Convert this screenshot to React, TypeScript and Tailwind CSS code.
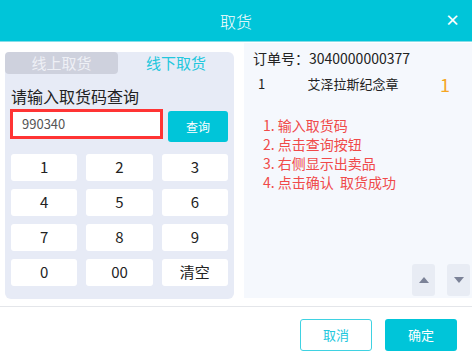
import React from "react";

const keys = ["1", "2", "3", "4", "5", "6", "7", "8", "9", "0", "00", "清空"];

const steps = ["1. 输入取货码", "2. 点击查询按钮", "3. 右侧显示出卖品", "4. 点击确认  取货成功"];

export default function App() {
  return (
    <div
      className="w-[472px] h-[360px] bg-white overflow-hidden"
      style={{ fontFamily: '"Noto Sans CJK SC", "Noto Sans", sans-serif' }}
    >
      {/* header */}
      <div className="relative h-[42px] bg-[#00c5d9] border-b border-[#86dde8] flex items-center justify-center">
        <span className="text-white text-[16px] font-light">取货</span>
        <span className="absolute right-[12px] top-[11px] text-white text-[15px] font-bold leading-[18px]">×</span>
      </div>

      {/* body */}
      <div className="flex h-[265px] border-b border-[#e4e6ea]">
        {/* left panel */}
        <div className="ml-[5px] mt-[10px] w-[229px] h-[247px] bg-[#e7ebf6] rounded-[6px]">
          <div className="flex h-[22px]">
            <div className="w-[113px] bg-[#ced1dd] rounded-[4px] flex items-center justify-center text-[15px] text-[#eef0f6]">
              线上取货
            </div>
            <div className="flex-1 flex items-center justify-center text-[15px] text-[#22c7dd]">线下取货</div>
          </div>
          <div className="mt-[12px] pl-[6px] text-[16px] leading-[20px] text-[#222]">请输入取货码查询</div>
          <div className="flex items-start mt-[3px] pl-[5px]">
            <div className="w-[153px] h-[30px] border-[3px] border-[#ff3434] bg-white flex items-center pl-[9px] text-[13px] text-[#555]">
              990340
            </div>
            <button className="ml-[5px] mt-[2px] w-[60px] h-[31px] bg-[#00c5d9] rounded-[3px] text-white text-[12px]">
              查询
            </button>
          </div>
          <div className="grid grid-cols-3 gap-x-[9px] gap-y-[8px] px-[6px] mt-[12px]">
            {keys.map((k) => (
              <button
                key={k}
                className="h-[27px] bg-white rounded-[3px] text-[15px] text-[#222] flex items-center justify-center"
              >
                {k}
              </button>
            ))}
          </div>
        </div>

        {/* right panel */}
        <div className="ml-[10px] flex-1 mt-[1px] h-[255px] bg-[#f5f8fd] relative">
          <div className="pl-[9px] pt-[7px] text-[14px] leading-[16px] text-[#222]">订单号：3040000000377</div>
          <div className="flex items-center h-[20px] mt-[8px] text-[13px] text-[#222]">
            <span className="w-[24px] pl-[14px]">1</span>
            <span className="flex-1 text-center pl-[20px]">艾泽拉斯纪念章</span>
            <span className="w-[54px] text-[#f5a623] text-[18px] text-center">1</span>
          </div>
          <div className="pl-[19px] mt-[22px] text-[14px] leading-[19px] text-[#f04a4a]">
            {steps.map((s) => (
              <div key={s} className="whitespace-pre">
                {s}
              </div>
            ))}
          </div>
          <div className="absolute right-[2px] bottom-[2px] flex gap-[12px]">
            <div className="w-[23px] h-[32px] bg-[#e8ecf4] rounded-[3px] flex items-center justify-center">
              <svg width="10" height="6" viewBox="0 0 10 6">
                <path d="M0 6 L5 0 L10 6 Z" fill="#7b8297" />
              </svg>
            </div>
            <div className="w-[23px] h-[32px] bg-[#e8ecf4] rounded-[3px] flex items-center justify-center">
              <svg width="10" height="6" viewBox="0 0 10 6">
                <path d="M0 0 L10 0 L5 6 Z" fill="#7b8297" />
              </svg>
            </div>
          </div>
        </div>
      </div>

      {/* footer */}
      <div className="flex justify-end gap-[13px] pt-[12px] pr-[15px]">
        <button className="w-[72px] h-[32px] border border-[#3fd2e2] rounded-[3px] text-[#22c7dd] text-[13px]">
          取消
        </button>
        <button className="w-[72px] h-[32px] bg-[#00c5d9] rounded-[3px] text-white text-[13px]">确定</button>
      </div>
    </div>
  );
}
